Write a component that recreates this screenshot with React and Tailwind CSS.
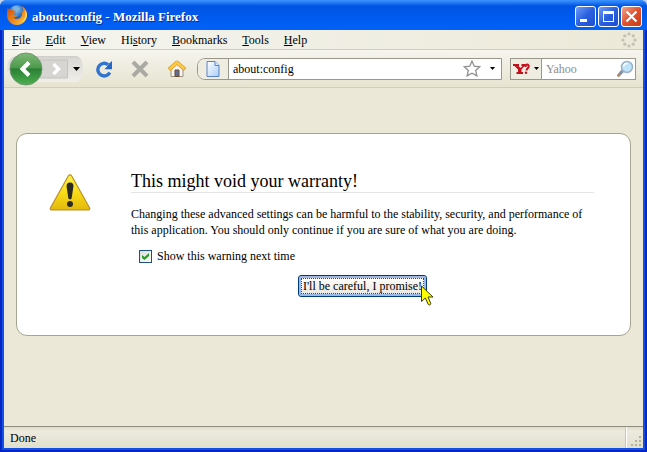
import React, { useState } from "react";

const menus = [
  { before: "", key: "F", after: "ile" },
  { before: "", key: "E", after: "dit" },
  { before: "", key: "V", after: "iew" },
  { before: "Hi", key: "s", after: "tory" },
  { before: "", key: "B", after: "ookmarks" },
  { before: "", key: "T", after: "ools" },
  { before: "", key: "H", after: "elp" },
];

const FirefoxLogo = () => (
  <svg width="22" height="22" viewBox="0 0 22 22" aria-hidden="true">
    <defs>
      <radialGradient id="globe" cx="0.45" cy="0.25" r="0.8">
        <stop offset="0" stopColor="#8fd0f5" />
        <stop offset="0.5" stopColor="#2f6fc0" />
        <stop offset="1" stopColor="#12245f" />
      </radialGradient>
      <linearGradient id="fox" x1="0" y1="0" x2="1" y2="1">
        <stop offset="0" stopColor="#c8480c" />
        <stop offset="0.55" stopColor="#f08a1c" />
        <stop offset="1" stopColor="#fbd84a" />
      </linearGradient>
    </defs>
    <circle cx="11" cy="10" r="9" fill="url(#globe)" />
    <path d="M7 3c2-1 3-1 4 0l3 1-1 2-3 1-2-1z" fill="#7fb4dd" />
    <path
      d="M2 3c0 2 .5 2 1.500 2.500C5 5 6 5.500 7 6.500l3 .5c-.5 1.500-2.500 2-2.500 3.500 1 1 2.500.5 4 .5-.5 2-3 2.500-4.500 2 2 2.500 6 2.500 8 0 1.500-2 1.500-4 .5-6.500 1.200.8 1.500 1.500 1.800 2.500C17.500 6.500 17 4 15.500 2c4 2 6 6 5.500 10-.6 5.500-5 9-10 9-6 0-10-4.500-10-10C1 8 1 5 2 3z"
      fill="url(#fox)"
    />
    <path d="M19 6c1.500 4 .5 9-3.500 12 2.500-.5 5-3.500 5.300-7 .1-2-.6-3.800-1.800-5z" fill="#fde873" />
  </svg>
);

const WarningIcon = () => (
  <svg width="42" height="38" viewBox="0 0 42 38" aria-hidden="true">
    <defs>
      <linearGradient id="warn" x1="0" y1="0" x2="0" y2="1">
        <stop offset="0" stopColor="#fff04a" />
        <stop offset="0.5" stopColor="#f8dc18" />
        <stop offset="1" stopColor="#e3b80c" />
      </linearGradient>
    </defs>
    <path
      d="M19.300 2c.8-1.400 2.600-1.400 3.400 0l17.800 31.700c.7 1.300-.1 2.300-1.500 2.300H3c-1.400 0-2.200-1-1.500-2.300z"
      fill="url(#warn)"
      stroke="#b98f2c"
      strokeWidth="1.200"
    />
    <path
      d="M21 8.500c2.500 0 3.600 1.500 3.400 4l-1.700 11.500c-.3 1.800-3.100 1.800-3.400 0l-1.700-11.500c-.2-2.500.9-4 3.400-4z"
      fill="#2b2a22"
    />
    <circle cx="21" cy="30" r="3" fill="#2b2a22" />
  </svg>
);

const BackForward = () => (
  <svg width="80" height="34" viewBox="0 0 80 34" aria-hidden="true">
    <defs>
      <linearGradient id="tray" x1="0" y1="0" x2="0" y2="1">
        <stop offset="0" stopColor="#cfcec9" />
        <stop offset="0.15" stopColor="#dcdbd7" />
        <stop offset="1" stopColor="#efeee9" />
      </linearGradient>
      <linearGradient id="green" x1="0" y1="0" x2="0" y2="1">
        <stop offset="0" stopColor="#7fb878" />
        <stop offset="0.46" stopColor="#4c9a4b" />
        <stop offset="0.5" stopColor="#2a8034" />
        <stop offset="1" stopColor="#4db050" />
      </linearGradient>
    </defs>
    <path d="M12 4h58c4 0 7 5 7 13s-3 13-7 13H12C5 30 1 25 1 17S5 4 12 4z" fill="url(#tray)" />
    <path d="M34 8h27.500v18H34z" fill="#d6d5d1" stroke="#c4c3be" />
    <path d="M47.500 12l5 5-5 5" fill="none" stroke="#fff" strokeWidth="3.400" />
    <circle cx="20" cy="17" r="16" fill="url(#green)" stroke="#6f946c" />
    <path d="M23 10.500L16.500 17l6.500 6.500" fill="none" stroke="#fff" strokeWidth="4" />
    <path d="M67 15h7l-3.500 4z" fill="#000" />
  </svg>
);

const ReloadIcon = () => (
  <svg width="18" height="18" viewBox="0 0 18 18" aria-hidden="true">
    <path d="M14.800 12.500A6.300 6.300 0 1 1 13 4.600" fill="none" stroke="#2f74d0" strokeWidth="3.400" />
    <path d="M17 1v8.200H9.500L12 6.500 14 3.500z" fill="#2568c8" />
  </svg>
);

const StopIcon = () => (
  <svg width="18" height="18" viewBox="0 0 18 18" aria-hidden="true">
    <path d="M2 2l14 14M16 2L2 16" stroke="#aaa9a3" strokeWidth="4" />
  </svg>
);

const HomeIcon = () => (
  <svg width="20" height="18" viewBox="0 0 20 18" aria-hidden="true">
    <path d="M4 8l6-5 6 5v8.500H4z" fill="#f6f4f0" stroke="#9a8f80" />
    <path d="M8 10h4v6.500H8z" fill="#5a6f9c" stroke="#6b4a2c" />
    <path d="M2 9.500L10 2.500 18 9.500" fill="none" stroke="#d99a24" strokeWidth="4" strokeLinejoin="round" />
    <path d="M2.500 9l7.500-6.500L17.500 9" fill="none" stroke="#fbc846" strokeWidth="2.800" strokeLinejoin="round" />
  </svg>
);

const PageIcon = () => (
  <svg width="14" height="16" viewBox="0 0 14 16" aria-hidden="true">
    <defs>
      <linearGradient id="page" x1="0" y1="0" x2="1" y2="1">
        <stop offset="0" stopColor="#fff" />
        <stop offset="1" stopColor="#a9cdf6" />
      </linearGradient>
    </defs>
    <path d="M1 .5h8l4 4v11H1z" fill="url(#page)" stroke="#5b83c4" />
    <path d="M9 .5v4h4" fill="#dcebfc" stroke="#5b83c4" />
  </svg>
);

const StarIcon = () => (
  <svg width="18" height="17" viewBox="0 0 18 17" aria-hidden="true">
    <path
      d="M9 1.200l2.300 5 5.500.6-4.100 3.700 1.200 5.400L9 13.200l-4.900 2.700 1.200-5.400L1.200 6.800l5.500-.6z"
      fill="#fff"
      stroke="#8f8f8f"
      strokeWidth="1.300"
    />
  </svg>
);

const Caret = () => (
  <svg width="5" height="3" viewBox="0 0 5 3" aria-hidden="true">
    <path d="M0 0h5L2.500 3z" fill="#000" />
  </svg>
);

const YahooIcon = () => (
  <svg width="17" height="12" viewBox="0 0 17 12" aria-hidden="true">
    <path
      d="M0 1h6v2H5.500l2 2 2-2H8.500V1h4v2h-1L8.500 6.500V9H10v2H3.500V9H5V6.500L1.500 3H0z"
      fill="#c4101c"
    />
    <path d="M12.500 4c0-3.500 3.500-3 3.200-.5-.3 1.800-2 2-2.200 4" fill="none" stroke="#c4101c" strokeWidth="2" />
    <circle cx="13" cy="9.800" r="1.200" fill="#c4101c" />
  </svg>
);

const SearchIcon = () => (
  <svg width="18" height="18" viewBox="0 0 18 18" aria-hidden="true">
    <path d="M7 10.500L2.500 15.500" stroke="#b08a68" strokeWidth="3" strokeLinecap="round" />
    <path d="M7 10.500L4.500 13" stroke="#7f93ad" strokeWidth="3" strokeLinecap="round" />
    <circle cx="11" cy="7" r="5.500" fill="#bfe4fa" stroke="#9cb2c8" strokeWidth="1.500" />
    <path d="M7.500 6.500a3.500 3.500 0 0 1 4-3" fill="none" stroke="#fff" strokeWidth="1.500" />
  </svg>
);

const Throbber = () => (
  <svg width="16" height="16" viewBox="0 0 16 16" fill="#c3c0b4" aria-hidden="true">
    <circle cx="8" cy="2" r="1.600" />
    <circle cx="12.200" cy="3.800" r="1.600" />
    <circle cx="14" cy="8" r="1.600" />
    <circle cx="12.200" cy="12.200" r="1.600" />
    <circle cx="8" cy="14" r="1.600" />
    <circle cx="3.800" cy="12.200" r="1.600" />
    <circle cx="2" cy="8" r="1.600" />
    <circle cx="3.800" cy="3.800" r="1.600" />
  </svg>
);

const Cursor = () => (
  <svg width="13" height="21" viewBox="0 0 13 21" aria-hidden="true">
    <path
      d="M.5 1v15.500l3.800-3.500 3 6.500c.8 1 2.700.2 2.500-1L7 12h5z"
      fill="#ffff00"
      stroke="#3c3c14"
    />
  </svg>
);

const TitleBar = () => (
  <div className="flex h-[30px] items-center justify-between rounded-t-md bg-linear-to-b from-[#3d95ff] via-[#0054e3] via-20% to-[#0062fa] pl-[6px] pr-[5px]">
    <div className="flex items-center gap-1">
      <FirefoxLogo />
      <h1 className="pt-[3px] text-[13px] font-bold text-white [text-shadow:1px_1px_0_#0a2c8c]">
        about:config - Mozilla Firefox
      </h1>
    </div>
    <div className="flex gap-[2px] pt-[3px]">
      <button
        aria-label="Minimize"
        className="h-[21px] w-[21px] rounded-[3px] border border-white bg-linear-to-br from-[#6f9cf5] via-[#2a5fe0] to-[#1e4fd0]"
      >
        <svg width="19" height="19" viewBox="0 0 19 19">
          <path d="M4 12h7v3H4z" fill="#fff" />
        </svg>
      </button>
      <button
        aria-label="Maximize"
        className="h-[21px] w-[21px] rounded-[3px] border border-white bg-linear-to-br from-[#6f9cf5] via-[#2a5fe0] to-[#1e4fd0]"
      >
        <svg width="19" height="19" viewBox="0 0 19 19">
          <path d="M4 4h11v11H4zM5 7v7h9V7z" fill="#fff" fillRule="evenodd" />
        </svg>
      </button>
      <button
        aria-label="Close"
        className="h-[21px] w-[21px] rounded-[3px] border border-white bg-linear-to-br from-[#f0a088] via-[#e0502c] to-[#c83c14]"
      >
        <svg width="19" height="19" viewBox="0 0 19 19">
          <path d="M4.500 4.500l10 10M14.500 4.500l-10 10" stroke="#fff" strokeWidth="2.200" />
        </svg>
      </button>
    </div>
  </div>
);

const MenuBar = () => (
  <div className="flex h-5 items-center justify-between border-b border-[#d0cdbc] bg-linear-to-r from-[#f5f5f1] to-[#ece9d8] pl-2 pr-[6px]">
    <div className="flex gap-[15px]">
      {menus.map((menu) => (
        <button key={menu.before + menu.key + menu.after} className="leading-4">
          {menu.before}
          <span className="underline">{menu.key}</span>
          {menu.after}
        </button>
      ))}
    </div>
    <Throbber />
  </div>
);

const Toolbar = () => (
  <div className="flex h-[38px] items-center border-b border-[#d0cdbc] bg-linear-to-b from-[#f6f5ee] to-[#e6e3d0] pl-[2px] pr-[7px]">
    <button aria-label="Back and forward">
      <BackForward />
    </button>
    <div className="flex items-center gap-[18px] pl-[9px]">
      <button aria-label="Reload">
        <ReloadIcon />
      </button>
      <button aria-label="Stop">
        <StopIcon />
      </button>
      <button aria-label="Home">
        <HomeIcon />
      </button>
    </div>

    {/* LOCATION */}
    <div className="ml-[10px] flex h-[22px] min-w-0 flex-1 items-center overflow-hidden rounded-l-lg border border-[#9a988c] bg-white">
      <div className="flex h-full w-[31px] shrink-0 items-center justify-center border-r border-[#9a988c] bg-[#efede2]">
        <PageIcon />
      </div>
      <input
        type="text"
        aria-label="Location"
        defaultValue="about:config"
        className="min-w-0 flex-1 bg-transparent px-1 outline-none"
      />
      <button aria-label="Bookmark this page" className="pr-[3px]">
        <StarIcon />
      </button>
      <button aria-label="Show history" className="px-[6px]">
        <Caret />
      </button>
    </div>

    {/* SEARCH */}
    <div className="ml-2 flex h-[22px] w-[126px] items-center border border-[#9a988c] bg-white">
      <button
        aria-label="Search engine"
        className="flex h-full w-[31px] shrink-0 items-center justify-center gap-1 border-r border-[#9a988c] bg-[#efede2]"
      >
        <YahooIcon />
        <Caret />
      </button>
      <input
        type="text"
        aria-label="Search"
        placeholder="Yahoo"
        className="min-w-0 flex-1 bg-transparent px-1 outline-none placeholder:text-[#8c8c8c]"
      />
      <button aria-label="Go" className="pr-px">
        <SearchIcon />
      </button>
    </div>
  </div>
);

const Warning = () => {
  const [showNextTime, setShowNextTime] = useState(true);

  return (
    <div className="flex gap-10 rounded-[11px] border border-[#a5a592] bg-white pb-[38px] pl-8 pr-9 pt-9">
      <div className="shrink-0 pt-1">
        <WarningIcon />
      </div>
      <div className="min-w-0 flex-1">
        <h2 className="border-b border-[#e4e4e4] text-[18px] leading-[22px]">This might void your warranty!</h2>
        <p className="pt-[13px] leading-4">
          Changing these advanced settings can be harmful to the stability, security, and performance of this
          application. You should only continue if you are sure of what you are doing.
        </p>
        <label className="flex items-center gap-[5px] pl-2 pt-[10px] leading-4">
          <span className="relative flex">
            <input
              type="checkbox"
              checked={showNextTime}
              onChange={(e) => setShowNextTime(e.target.checked)}
              className="h-[13px] w-[13px] appearance-none border border-[#1c5180] bg-linear-to-br from-[#dcdcd7] to-white"
            />
            {showNextTime && (
              <svg
                className="pointer-events-none absolute left-[3px] top-[3px]"
                width="7"
                height="7"
                viewBox="0 0 7 7"
                aria-hidden="true"
              >
                <path d="M0 2v3l2.500 2L7 3V0L2.500 4z" fill="#21a121" />
              </svg>
            )}
          </span>
          Show this warning next time
        </label>
        <div className="flex justify-center pt-[11px]">
          <div className="relative">
            <button className="h-[22px] rounded-[3px] border border-[#003c74] bg-linear-to-b from-white to-[#e8e6dc] p-[2px] shadow-[inset_0_0_0_2px_#9db9ea]">
              <span className="flex h-full items-center border border-dotted border-[#444] px-px">
                I'll be careful, I promise!
              </span>
            </button>
            <div className="pointer-events-none absolute left-full top-[10px] -ml-[6px]">
              <Cursor />
            </div>
          </div>
        </div>
      </div>
    </div>
  );
};

const StatusBar = () => (
  <div className="flex h-[22px] items-stretch border-t border-[#8f8d80] bg-linear-to-b from-[#dedbcb] via-[#edebdf] via-20% to-[#e2dfcc]">
    <div className="flex flex-1 items-center border-r border-[#c9c6b4] pl-[6px]">Done</div>
    <div className="flex w-[17px] items-end justify-end border-l border-white">
      <svg width="12" height="12" viewBox="0 0 12 12" fill="#b3b09c" aria-hidden="true">
        <path d="M8 0h2v2H8zM4 4h2v2H4zM8 4h2v2H8zM0 8h2v2H0zM4 8h2v2H4zM8 8h2v2H8z" />
      </svg>
    </div>
  </div>
);

const App = () => {
  return (
    <div className="bg-[#c3d2ee]">
      <div className="flex min-h-screen flex-col rounded-t-lg bg-[#0831d9] font-['Liberation_Serif',serif] text-[12px] text-black">
        <TitleBar />
        <div className="flex flex-1 flex-col border-x-2 border-b-2 border-[#0526c4]">
          <div className="flex flex-1 flex-col border-x-2 border-b-2 border-[#1550e4] bg-[#ece9d8]">
            <MenuBar />
            <Toolbar />
            <main className="flex-1 bg-[#ebe8d7] px-3 pb-8 pt-[45px]">
              <Warning />
            </main>
            <StatusBar />
          </div>
        </div>
      </div>
    </div>
  );
};

export default App;
